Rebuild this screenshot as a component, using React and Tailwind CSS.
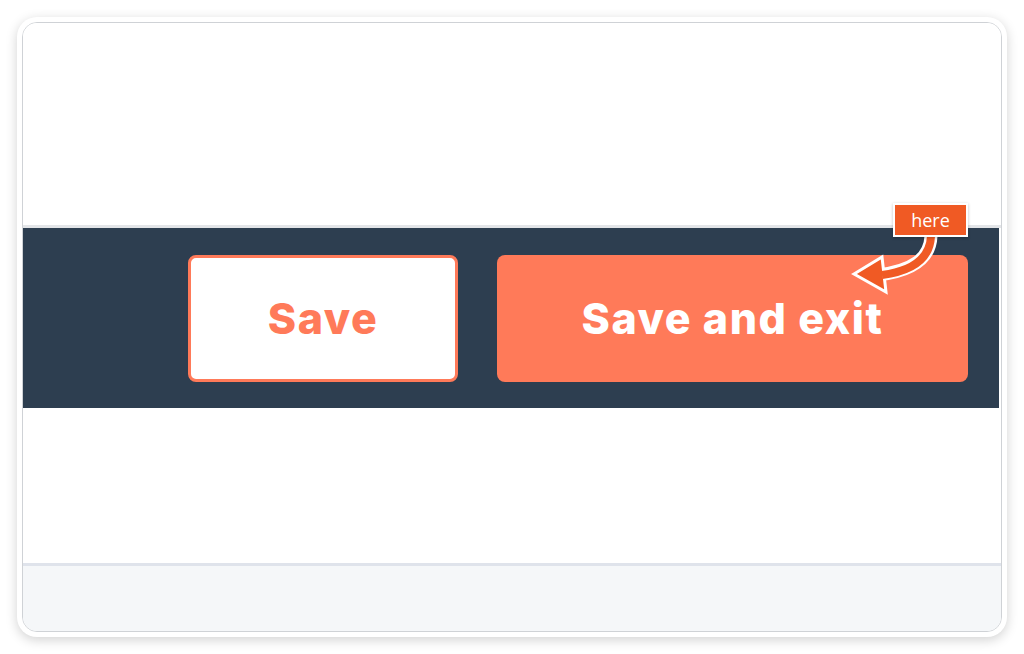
import React from 'react';

const HereCallout = () => {
  return (
    <>
      <svg className="absolute left-0 top-0 pointer-events-none" width="1024" height="654">
        <path d="M931 236 C930 259 912 271 878 275" fill="none" stroke="#ffffff" strokeWidth="13" strokeLinecap="round" />
        <polygon points="854,274 882,257 886,292" fill="#f05a24" stroke="#ffffff" strokeWidth="3" strokeLinejoin="miter" />
        <path d="M931 236 C930 259 912 271 882 275" fill="none" stroke="#f05a24" strokeWidth="8" />
      </svg>
      <div
        className="absolute left-[893px] top-[203px] w-[75px] h-[34px] flex items-center justify-center bg-[#f05a24] border-2 border-white text-white text-[18px] shadow-[0_1px_3px_rgba(0,0,0,0.25)]"
        style={{ fontFamily: '"Open Sans", sans-serif' }}
      >
        here
      </div>
    </>
  );
};

const App = () => {
  return (
    <div className="relative w-[1024px] h-[654px] bg-white p-[17px]">
      <div className="h-[620px] rounded-[20px] bg-white p-[5px] shadow-[0_3px_12px_rgba(0,0,0,0.18)]">
        <div className="h-full rounded-[15px] border border-[#cfd2d6] overflow-hidden flex flex-col">
          <div className="h-[205px] shrink-0 bg-white border-b-[3px] border-[#e3e5e8]" />
          <div
            className="h-[180px] shrink-0 bg-[#2d3e50] mr-[2px] flex items-start pt-[27px] pl-[165px] gap-[39px]"
            style={{ fontFamily: 'Inter, sans-serif' }}
          >
            <button className="w-[270px] h-[127px] rounded-[8px] border-[3px] border-[#ff7a59] bg-white text-[#ff7a59] text-[43px] font-extrabold tracking-[1.5px] flex items-center justify-center pb-[1px]">
              Save
            </button>
            <button className="w-[471px] h-[127px] rounded-[8px] bg-[#ff7a59] text-white text-[43px] font-extrabold tracking-[1.5px] flex items-center justify-center pb-[1px]">
              Save and exit
            </button>
          </div>
          <div className="h-[158px] shrink-0 bg-white border-b-[3px] border-[#dfe3eb]" />
          <div className="flex-1 bg-[#f5f7f9]" />
        </div>
      </div>
      <HereCallout />
    </div>
  );
};

export default App;
